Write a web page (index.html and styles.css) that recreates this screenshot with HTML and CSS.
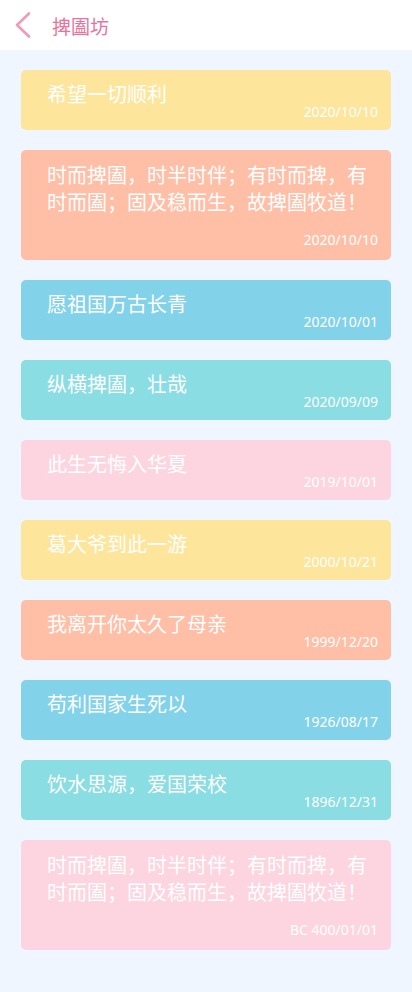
FILE: index.html
```html
<!DOCTYPE html>
<html lang="zh-CN">
<head>
<meta charset="utf-8">
<title>捭圔坊</title>
<link rel="stylesheet" href="styles.css">
</head>
<body>
<header class="topbar">
  <span class="back">
    <svg width="22" height="28" viewBox="0 0 22 28"><polyline points="17,2.5 5,14 17,25.5" fill="none" stroke="#f29ab6" stroke-width="2.6" stroke-linecap="round" stroke-linejoin="round"/></svg>
  </span>
  <h1 class="title">捭圔坊</h1>
</header>
<main class="list">
  <div class="card yellow"><p class="text">希望一切顺利</p><p class="date">2020/10/10</p></div>
  <div class="card salmon long"><p class="text">时而捭圔，时半时伴；有时而捭，有时而圔；固及稳而生，故捭圔牧道！</p><p class="date">2020/10/10</p></div>
  <div class="card blue"><p class="text">愿祖国万古长青</p><p class="date">2020/10/01</p></div>
  <div class="card cyan"><p class="text">纵横捭圔，壮哉</p><p class="date">2020/09/09</p></div>
  <div class="card pink"><p class="text">此生无悔入华夏</p><p class="date">2019/10/01</p></div>
  <div class="card yellow"><p class="text">葛大爷到此一游</p><p class="date">2000/10/21</p></div>
  <div class="card salmon"><p class="text">我离开你太久了母亲</p><p class="date">1999/12/20</p></div>
  <div class="card blue"><p class="text">苟利国家生死以</p><p class="date">1926/08/17</p></div>
  <div class="card cyan"><p class="text">饮水思源，爱国荣校</p><p class="date">1896/12/31</p></div>
  <div class="card pink long"><p class="text">时而捭圔，时半时伴；有时而捭，有时而圔；固及稳而生，故捭圔牧道！</p><p class="date">BC 400/01/01</p></div>
</main>
</body>
</html>
```

FILE: styles.css
```css
* { box-sizing: border-box; }
html, body { margin: 0; padding: 0; }
body {
  background: #eff6ff;
  font-family: "Noto Sans", "Noto Sans CJK SC", sans-serif;
  min-height: 992px;
}
.topbar {
  height: 50px;
  background: #ffffff;
  display: flex;
  align-items: center;
  padding-left: 12px;
}
.back {
  display: flex;
  width: 22px;
  height: 28px;
  margin-right: 18px;
}
.title {
  margin: 0;
  font-family: "Noto Sans CJK SC", sans-serif;
  font-weight: 400;
  font-size: 19px;
  color: #e9739c;
  line-height: 24px;
  padding-top: 1px;
}
.list {
  display: flex;
  flex-direction: column;
  gap: 20px;
  padding: 20px 21px 42px;
}
.card {
  border-radius: 5px;
  padding: 13px 13px 11px 26px;
  display: flex;
  flex-direction: column;
  color: #ffffff;
}
.text {
  margin: 0;
  padding-right: 11px;
  font-family: "Noto Sans CJK SC", sans-serif;
  font-size: 20px;
  line-height: 22px;
}
.date {
  margin: 0;
  text-align: right;
  font-size: 14px;
  line-height: 14px;
}
.long { padding-top: 11px; padding-bottom: 13px; }
.long .text { line-height: 27px; }
.long .date { margin-top: 18px; }
.yellow { background: #fee59c; }
.salmon { background: #ffbea6; }
.blue { background: #82d2ea; }
.cyan { background: #89dde3; }
.pink { background: #fcd5e0; }
```
